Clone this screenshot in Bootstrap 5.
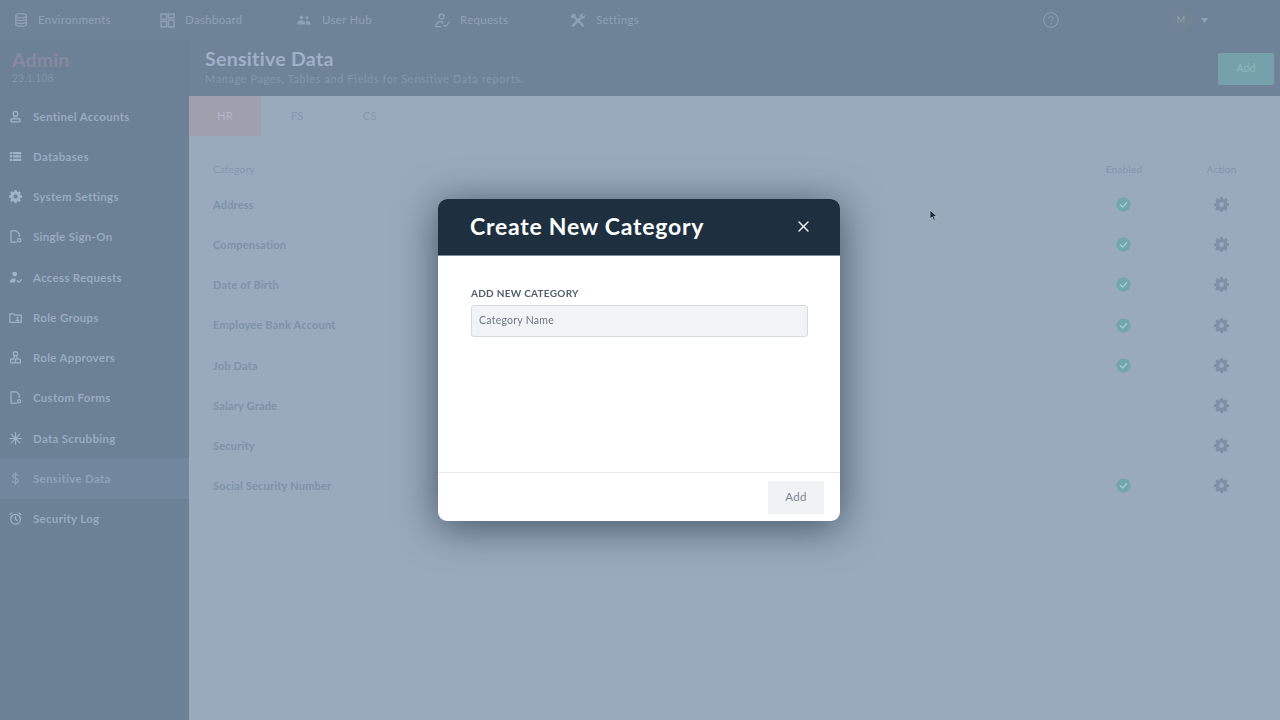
<!DOCTYPE html>
<html lang="en">
<head>
<meta charset="utf-8">
<title>Sensitive Data</title>
<link href="https://cdn.jsdelivr.net/npm/bootstrap@5.3.0/dist/css/bootstrap.min.css" rel="stylesheet">
<style>
html,body{height:100%;overflow:hidden}
body{font-family:"Lato","Open Sans",sans-serif;background:#99aabc;color:#8fa2b7;width:1280px;height:720px}
svg{display:block}
.ic{fill:none;stroke:currentColor;stroke-width:1.5;stroke-linecap:round;stroke-linejoin:round}
.ic-thin{stroke-width:1}
.topnav{height:40px;background:#6f8398;color:#8ea1b6;font-size:11.5px;letter-spacing:.3px}
.topitem{gap:10px}
.t1{width:160px;padding-left:14px}.t2{width:136px}.t3{width:138px}.t4{width:136px}.t5{width:473px}.t6{width:126px}
.ava{width:24px;height:24px;background:#708495;font-size:9px;color:#8ba2a9}
.pagewrap{height:680px}
.sidecol{width:189px;background:#6c8096;flex:none}
.admin-block{height:56px;padding:10px 0 0 12px;line-height:1}
.admin-name{font-size:19.5px;font-weight:700;color:#868a9f;letter-spacing:.15px}
.admin-ver{font-size:10.5px;color:#8095ab;margin-top:3px}
.sideitem{height:40.25px;padding-left:9px;gap:11px;font-size:11.5px;font-weight:700;color:#98abc0;letter-spacing:.3px}
.sideitem svg{width:13px;height:13px;flex:none;color:#a0b2c6}
.side-active{background:#72879d;color:#8fa3b9}
.side-active svg{color:#8fa3b9}
.maincol{flex:1 1 auto;min-width:0}
.pagehead{height:56px;background:#6f8398;padding:0 6px 0 16px}
.headtext{padding-bottom:3px}
.pagehead h1{font-size:19.5px;font-weight:700;color:#9fb1c6;margin:0;line-height:1;letter-spacing:.3px}
.pagehead p{font-size:11px;color:#8296ac;margin:5px 0 0;line-height:1;letter-spacing:.58px}
.addtop{width:56px;height:32px;background:#76a1aa;border:0;border-radius:2px;color:#8fb4bd;font-size:10.5px;padding:0;margin-top:2px}
.tabbar{height:40px;background:#99aabc;font-size:11px;letter-spacing:.4px;color:#8699ae}
.tabby{width:72.5px}
.tab-on{background:#a09fae;color:#b9b7c6;width:72px}
.tablewrap{padding:22px 35px 0 24px;font-size:11px;font-weight:700;color:#7e92a8;letter-spacing:.2px}
.thead-row{height:27px;color:#8296ac;font-weight:400;font-size:10px;padding-bottom:5px}
.trow{height:40.2px}
.cell-en{width:48px;margin-right:50px;display:flex;justify-content:center}
.cell-ac{width:47px;display:flex;justify-content:center}
.tick{width:15px;height:15px;color:#72a5ae;margin:0 1px 1px 0}
.cog{width:15px;height:15px;color:#7d90a6;margin-bottom:1px}
.overlayer{z-index:5;padding-right:2px}
.boxmodal{width:402px;height:322px;border:0;border-radius:9px;box-shadow:0 6px 40px rgba(45,60,80,.8);overflow:hidden;background:#fff}
.boxhead{height:57px;flex:none;background:#1e3040;border-bottom:1px solid #7d8e9c;padding:0 31px 1px 32px;color:#fff}
.boxhead h2{font-size:23px;font-weight:700;margin:0;letter-spacing:.75px;line-height:1}
.closex{width:11px;height:11px;color:#fff}
.boxbody{padding:31px 32px 0 33px;flex:1 1 auto}
.boxlabel{font-size:10px;font-weight:700;color:#4f5f6c;letter-spacing:.28px;margin-bottom:5px;line-height:13px;display:block}
.boxinput{height:32px;min-height:0;background:#f1f4f7;border:1px solid #d5dbe1;border-radius:3px;font-size:10.5px;padding:0 7px 2px;color:#667;letter-spacing:.25px;width:337px;box-shadow:none;font-family:inherit}
.boxinput::placeholder{color:#6d7883;opacity:1}
.boxfoot{height:49px;flex:none;border-top:1px solid #e6e9ec;padding:0 16px 0 0}
.boxadd{width:56px;height:33px;background:#f0f3f6;border:0;border-radius:0;font-size:11.5px;color:#7d8894;padding:0;letter-spacing:.3px}
.cursor-mark{left:929px;top:209px;width:9px;height:13px;z-index:6}
</style>
</head>
<body>
<svg width="0" height="0" class="position-absolute">
<defs>
<symbol id="i-cog" viewBox="0 0 16 16"><path fill="currentColor" fill-rule="evenodd" d="M6.6 0h2.8l.4 2.1 1.1.5 1.8-1.2 2 2-1.2 1.800.5 1.100 2 .4v2.800l-2 .4-.5 1.100 1.200 1.800-2 2-1.800-1.200-1.100.5-.4 2H6.600l-.4-2-1.100-.5-1.800 1.200-2-2 1.200-1.800-.5-1.100-2-.4V6.700l2-.4.5-1.100-1.200-1.800 2-2 1.800 1.200 1.100-.5zM8 5.400a2.600 2.600 0 1 0 0 5.200 2.600 2.600 0 0 0 0-5.200z"/></symbol>
<symbol id="i-tick" viewBox="0 0 16 16"><circle cx="8" cy="8" r="7.6" fill="currentColor"/><path d="M4.600 8.200l2.400 2.400 4.400-4.800" fill="none" stroke="#a6cdd0" stroke-width="1.400" stroke-linecap="round" stroke-linejoin="round"/></symbol>
<symbol id="i-user" viewBox="0 0 16 16"><g class="ic"><circle cx="8" cy="4.500" r="2.800"/><path d="M5.800 8.600h4.400M2.500 11h11v3.500h-11z"/></g></symbol>
<symbol id="i-list" viewBox="0 0 16 16"><path fill="currentColor" d="M1 2.500h3v2.600H1zM5 2.500h10v2.600H5zM1 6.600h3v2.600H1zM5 6.600h10v2.600H5zM1 10.800h3v2.600H1zM5 10.800h10v2.600H5z"/></symbol>
<symbol id="i-doc" viewBox="0 0 16 16"><g class="ic"><path d="M9 15H2.500V1h6.500l3.500 3.500V8"/><circle cx="12.500" cy="12.500" r="2"/></g></symbol>
<symbol id="i-req" viewBox="0 0 16 16"><circle cx="7" cy="3.800" r="3" fill="currentColor"/><path fill="currentColor" d="M1 14c0-3.500 2.500-5 6-5l1.500 2L7 14z"/><path class="ic" d="M10 12l2 2 3.500-3.500"/></symbol>
<symbol id="i-folder" viewBox="0 0 16 16"><path class="ic" d="M1 3.500h5l1.200 1.500H15v9H1z"/><circle cx="10.500" cy="8.500" r="1.300" fill="currentColor"/><path fill="currentColor" d="M8 12.500c0-1.500 1-2 2.500-2s2.500.5 2.500 2z"/></symbol>
<symbol id="i-appr" viewBox="0 0 16 16"><g class="ic"><circle cx="8" cy="3.500" r="2.600"/><path d="M6.600 6.200L6 10H2v4.500h12V10h-4l-.6-3.800M8 10v4.500"/></g></symbol>
<symbol id="i-star" viewBox="0 0 16 16"><path class="ic" d="M8 .8v14.400M.8 8h14.400M2.900 2.900l10.200 10.200M13.100 2.900L2.900 13.100"/><circle cx="8" cy="8" r="2.400" fill="currentColor"/></symbol>
<symbol id="i-clock" viewBox="0 0 16 16"><g class="ic"><circle cx="8" cy="8.800" r="6"/><path d="M8 5.500v3.500l2.300 1.400M1.200 3.200L3.600 1.200M14.800 3.200l-2.400-2"/></g></symbol>
<symbol id="i-db" viewBox="0 0 16 16"><g class="ic"><ellipse cx="8" cy="3.200" rx="6" ry="2.400"/><path d="M2 3.200v9.600c0 1.300 2.700 2.400 6 2.400s6-1.100 6-2.400V3.200M2 6.400c0 1.300 2.700 2.400 6 2.400s6-1.100 6-2.400M2 9.600c0 1.300 2.700 2.400 6 2.400s6-1.100 6-2.400"/></g></symbol>
<symbol id="i-grid" viewBox="0 0 16 16"><path class="ic" d="M1 1h6v6H1zM9 1h6v4H9zM1 9h6v6H1zM9 7.500h6V15H9z"/></symbol>
<symbol id="i-hub" viewBox="0 0 16 16"><circle cx="5" cy="5" r="2.200" fill="currentColor"/><circle cx="11.500" cy="5.400" r="1.800" fill="currentColor"/><path fill="currentColor" d="M0 13c0-3 2-4.600 5-4.600S9.500 10 9.500 13zM10.500 13c0-1.500-.3-2.800-1-3.800 2.500-.8 6-.2 6.500 3.800z"/></symbol>
<symbol id="i-hand" viewBox="0 0 16 16"><g class="ic"><circle cx="7.500" cy="3.600" r="2.600"/><path d="M1 14.500c1-1.500 1-5 4.500-5.500H8c1 .3 1 1.500 0 1.800M1 14.500h6M10 13l1.800 1.500L15.500 10"/></g></symbol>
<symbol id="i-tools" viewBox="0 0 16 16"><path fill="currentColor" d="M1 13.400L9.800 4.300 11.700 6.200 2.700 15.100zM0 3.500L3.200.6 6 1.500 5 3.600 14.900 13l-1.800 1.900L3.400 5.100 1.800 5.500zM9.600 3.600C9.700 1.700 11.600 0 14 .5L12.100 2.500 13.500 3.900 15.500 2C16 4.300 14.200 6.300 12.300 6.200z"/></symbol>
<symbol id="i-dollar" viewBox="0 0 16 16"><path class="ic" d="M11 4.500C10.500 3 9.500 2.500 8 2.500c-2 0-3.300 1-3.300 2.600C4.700 8.500 11.400 7 11.400 10.800c0 1.700-1.500 2.700-3.400 2.700-1.700 0-3-.8-3.500-2.300M8 .8v14.400"/></symbol>
</defs>
</svg>

<nav class="topnav d-flex align-items-center">
  <div class="t1 topitem d-flex align-items-center"><svg width="14" height="14"><use href="#i-db"/></svg><span>Environments</span></div>
  <div class="t2 topitem d-flex align-items-center"><svg width="15" height="15"><use href="#i-grid"/></svg><span>Dashboard</span></div>
  <div class="t3 topitem d-flex align-items-center"><svg width="16" height="14"><use href="#i-hub"/></svg><span>User Hub</span></div>
  <div class="t4 topitem d-flex align-items-center"><svg width="16" height="15"><use href="#i-hand"/></svg><span>Requests</span></div>
  <div class="t5 topitem d-flex align-items-center"><svg width="16" height="15"><use href="#i-tools"/></svg><span>Settings</span></div>
  <div class="t6"><svg width="16" height="16" viewBox="0 0 16 16"><circle class="ic ic-thin" cx="8" cy="8" r="7.300"/><path class="ic ic-thin" d="M5.900 6.200c0-1.200 1-2 2.100-2s2.100.8 2.100 2c0 1.500-2.100 1.500-2.100 3.300"/><circle cx="8" cy="11.700" r=".8" fill="currentColor"/></svg></div>
  <div class="d-flex align-items-center gap-2">
    <span class="d-flex align-items-center justify-content-center rounded-circle ava">M</span>
    <svg width="7" height="5" viewBox="0 0 7 5"><path fill="currentColor" d="M0 0h7L3.500 5z"/></svg>
  </div>
</nav>

<div class="pagewrap d-flex">
  <aside class="sidecol">
    <div class="admin-block">
      <div class="admin-name">Admin</div>
      <div class="admin-ver">23.1.108</div>
    </div>
    <div class="sideitem d-flex align-items-center"><svg><use href="#i-user"/></svg>Sentinel Accounts</div>
    <div class="sideitem d-flex align-items-center"><svg><use href="#i-list"/></svg>Databases</div>
    <div class="sideitem d-flex align-items-center"><svg><use href="#i-cog"/></svg>System Settings</div>
    <div class="sideitem d-flex align-items-center"><svg><use href="#i-doc"/></svg>Single Sign-On</div>
    <div class="sideitem d-flex align-items-center"><svg><use href="#i-req"/></svg>Access Requests</div>
    <div class="sideitem d-flex align-items-center"><svg><use href="#i-folder"/></svg>Role Groups</div>
    <div class="sideitem d-flex align-items-center"><svg><use href="#i-appr"/></svg>Role Approvers</div>
    <div class="sideitem d-flex align-items-center"><svg><use href="#i-doc"/></svg>Custom Forms</div>
    <div class="sideitem d-flex align-items-center"><svg><use href="#i-star"/></svg>Data Scrubbing</div>
    <div class="sideitem side-active d-flex align-items-center"><svg><use href="#i-dollar"/></svg>Sensitive Data</div>
    <div class="sideitem d-flex align-items-center"><svg><use href="#i-clock"/></svg>Security Log</div>
  </aside>
  <main class="maincol">
    <header class="pagehead d-flex align-items-center justify-content-between">
      <div class="headtext"><h1>Sensitive Data</h1><p>Manage Pages, Tables and Fields for Sensitive Data reports.</p></div>
      <button class="addtop" type="button">Add</button>
    </header>
    <div class="tabbar d-flex">
      <div class="tabby tab-on d-flex align-items-center justify-content-center">HR</div>
      <div class="tabby d-flex align-items-center justify-content-center">FS</div>
      <div class="tabby d-flex align-items-center justify-content-center">CS</div>
    </div>
    <div class="tablewrap">
      <div class="thead-row d-flex align-items-center"><div class="flex-grow-1">Category</div><div class="cell-en">Enabled</div><div class="cell-ac">Action</div></div>
      <div class="trow d-flex align-items-center"><div class="flex-grow-1">Address</div><div class="cell-en"><svg class="tick"><use href="#i-tick"/></svg></div><div class="cell-ac"><svg class="cog"><use href="#i-cog"/></svg></div></div>
      <div class="trow d-flex align-items-center"><div class="flex-grow-1">Compensation</div><div class="cell-en"><svg class="tick"><use href="#i-tick"/></svg></div><div class="cell-ac"><svg class="cog"><use href="#i-cog"/></svg></div></div>
      <div class="trow d-flex align-items-center"><div class="flex-grow-1">Date of Birth</div><div class="cell-en"><svg class="tick"><use href="#i-tick"/></svg></div><div class="cell-ac"><svg class="cog"><use href="#i-cog"/></svg></div></div>
      <div class="trow d-flex align-items-center"><div class="flex-grow-1">Employee Bank Account</div><div class="cell-en"><svg class="tick"><use href="#i-tick"/></svg></div><div class="cell-ac"><svg class="cog"><use href="#i-cog"/></svg></div></div>
      <div class="trow d-flex align-items-center"><div class="flex-grow-1">Job Data</div><div class="cell-en"><svg class="tick"><use href="#i-tick"/></svg></div><div class="cell-ac"><svg class="cog"><use href="#i-cog"/></svg></div></div>
      <div class="trow d-flex align-items-center"><div class="flex-grow-1">Salary Grade</div><div class="cell-en"></div><div class="cell-ac"><svg class="cog"><use href="#i-cog"/></svg></div></div>
      <div class="trow d-flex align-items-center"><div class="flex-grow-1">Security</div><div class="cell-en"></div><div class="cell-ac"><svg class="cog"><use href="#i-cog"/></svg></div></div>
      <div class="trow d-flex align-items-center"><div class="flex-grow-1">Social Security Number</div><div class="cell-en"><svg class="tick"><use href="#i-tick"/></svg></div><div class="cell-ac"><svg class="cog"><use href="#i-cog"/></svg></div></div>
    </div>
  </main>
</div>

<div class="overlayer position-fixed top-0 start-0 w-100 h-100 d-flex align-items-center justify-content-center">
  <div class="modal-content boxmodal d-flex flex-column">
    <div class="boxhead d-flex align-items-center justify-content-between">
      <h2>Create New Category</h2>
      <svg class="closex" viewBox="0 0 11 11"><path d="M1 1l9 9M10 1l-9 9" fill="none" stroke="currentColor" stroke-width="1.400" stroke-linecap="round"/></svg>
    </div>
    <div class="boxbody">
      <label class="boxlabel" for="catname">ADD NEW CATEGORY</label>
      <input id="catname" class="boxinput form-control" placeholder="Category Name">
    </div>
    <div class="boxfoot d-flex align-items-center justify-content-end">
      <button class="boxadd" type="button">Add</button>
    </div>
  </div>
</div>
<svg class="cursor-mark position-absolute" viewBox="0 0 9 13"><path d="M1 1v9l2.200-2 1.500 3.500 1.600-.7L4.800 7.500H8z" fill="#1d2c3a" stroke="#b5c2cf" stroke-width=".8"/></svg>
<script src="https://cdn.jsdelivr.net/npm/bootstrap@5.3.0/dist/js/bootstrap.bundle.min.js"></script>
</body>
</html>
